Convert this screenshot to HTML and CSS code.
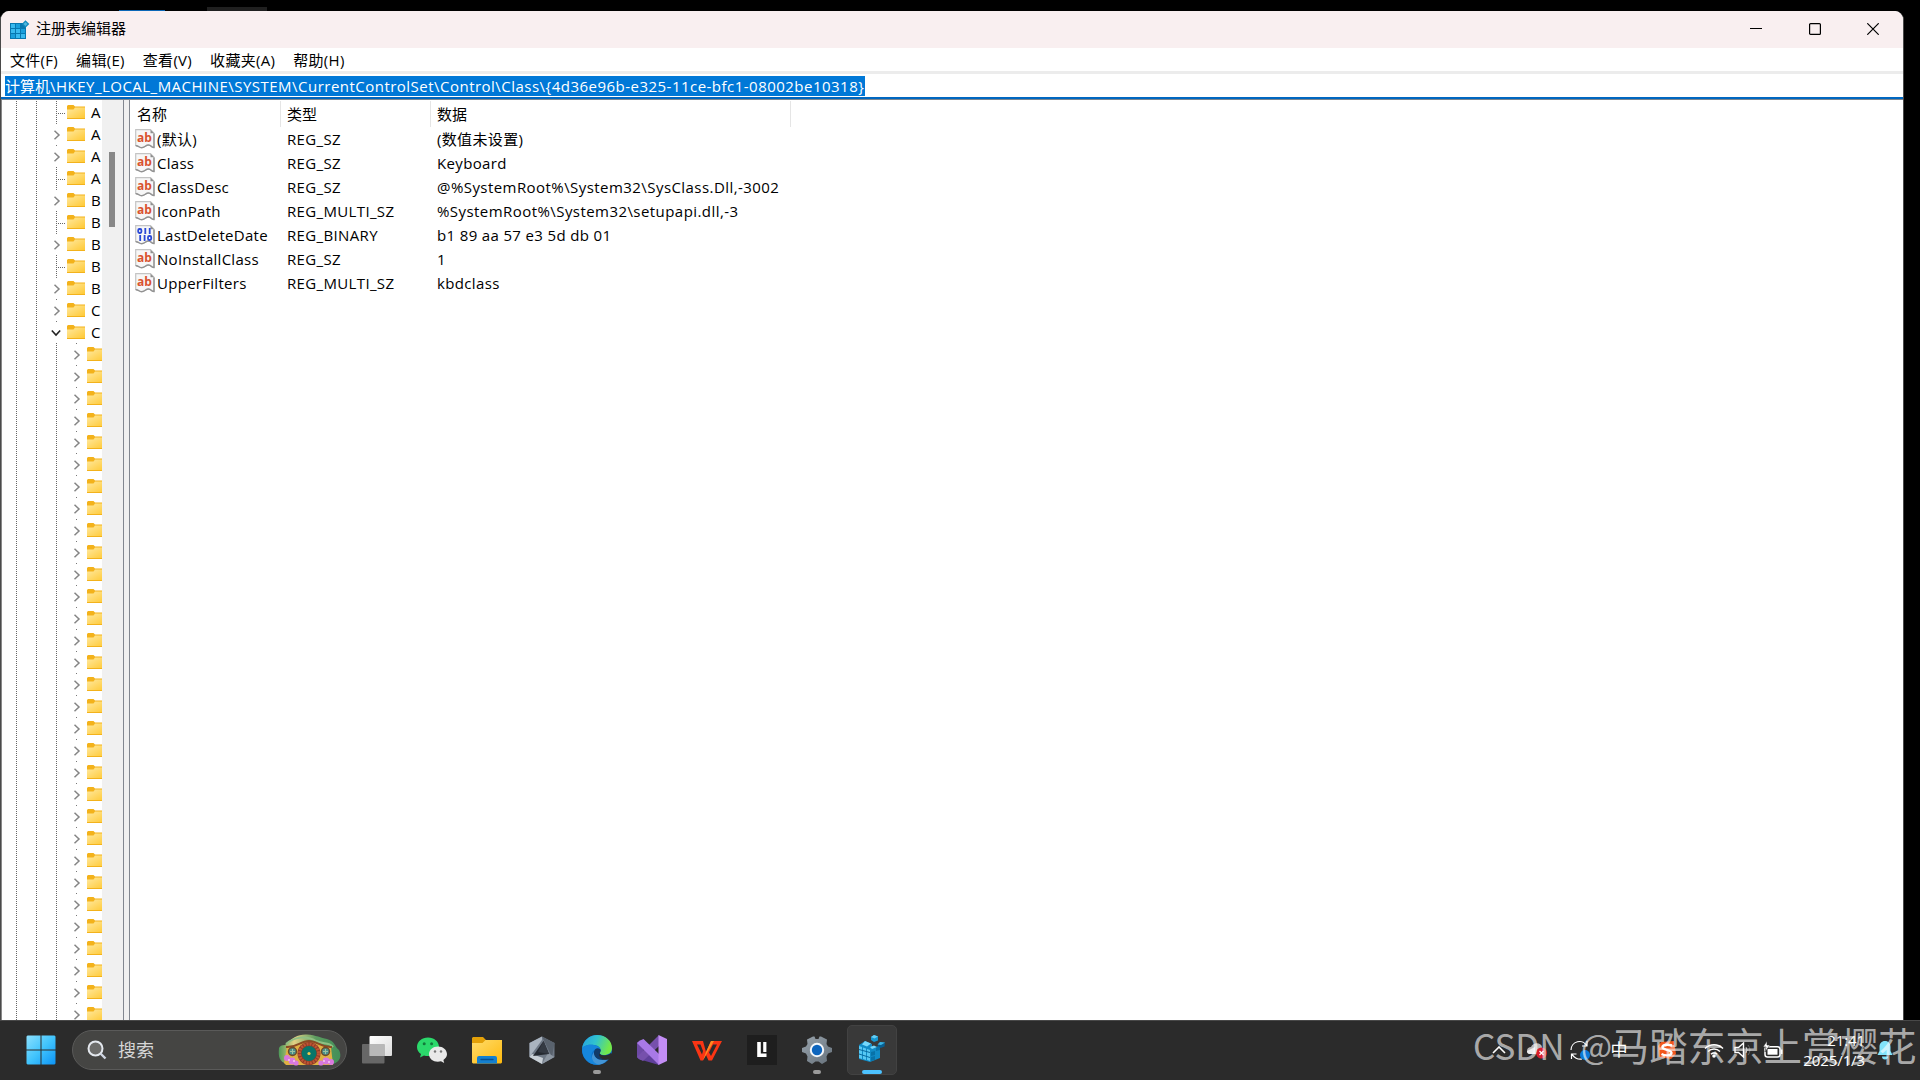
FILE: index.html
```html
<!DOCTYPE html>
<html lang="zh-CN">

<head>
    <meta charset="UTF-8">
    <meta name="viewport" content="width=device-width, initial-scale=1.0">
    <title>注册表编辑器</title>
    <link rel="stylesheet" href="styles.css">
</head>

<body>
    <!-- shared icons -->
    <svg class="defs">
        <defs>
            <linearGradient id="gFolder" x1="0" y1="0" x2="1" y2="1">
                <stop offset="0" stop-color="#ffe9a0" />
                <stop offset="1" stop-color="#ffc935" />
            </linearGradient>
            <linearGradient id="gStart" x1="0" y1="0" x2="1" y2="1">
                <stop offset="0" stop-color="#8ce0fd" />
                <stop offset=".5" stop-color="#41c4fd" />
                <stop offset="1" stop-color="#0c93f5" />
            </linearGradient>
            <linearGradient id="gEdge" x1="0" y1="0" x2="1" y2=".3">
                <stop offset="0" stop-color="#259ee0" />
                <stop offset=".5" stop-color="#31c3cf" />
                <stop offset="1" stop-color="#73e84a" />
            </linearGradient>
            <linearGradient id="gExplorer" x1="0" y1="0" x2="1" y2="1">
                <stop offset="0" stop-color="#ffdc6b" />
                <stop offset="1" stop-color="#ffb90d" />
            </linearGradient>
            <linearGradient id="gGear" x1="0" y1="0" x2="1" y2="1">
                <stop offset="0" stop-color="#98a3ac" />
                <stop offset="1" stop-color="#66717b" />
            </linearGradient>
            <linearGradient id="gHill" x1="0" y1="0" x2="1" y2="0">
                <stop offset="0" stop-color="#4d9a59" />
                <stop offset=".25" stop-color="#e3d184" />
                <stop offset=".6" stop-color="#5c9c60" />
                <stop offset="1" stop-color="#428f58" />
            </linearGradient>
            <linearGradient id="gTaskView" x1="0" y1="0" x2="1" y2="1">
                <stop offset="0" stop-color="#fff" />
                <stop offset="1" stop-color="#dcdcdc" />
            </linearGradient>
        </defs>
        <symbol id="folder" viewBox="0 0 18 14">
            <path d="M0 1 L1 0 H6.5 L8 1.500 H18 V14 H0 Z" fill="#f3b21b" />
            <path d="M0 4.500 H6.500 L8 2.500 H18 V13 H0 Z" fill="url(#gFolder)" />
        </symbol>
        <symbol id="right" viewBox="0 0 8 10">
            <path d="M1.500 .8 L6 5 L1.500 9.200" fill="none" stroke="#858585" stroke-width="1.500" />
        </symbol>
        <symbol id="down" viewBox="0 0 10 8">
            <path d="M.8 1.500 L5 6 L9.200 1.500" fill="none" stroke="#222" stroke-width="1.600" />
        </symbol>
        <symbol id="sheet" viewBox="0 0 20 20">
            <path d="M.7 .7 H15.500 L19 4.200 V18.300 C16 18.800 16.500 16 13.500 16 C10.500 16 10 18.500 6.500 18.500 C4 18.500 3.500 16.500 .7 16.500 Z" fill="#f7f7f7" stroke="#c4c4c4" stroke-width="1.200" />
            <path d="M.7 16.700 C3.500 16.500 4 18.700 6.500 18.700 C10 18.700 10.500 16 13.500 16 C16.500 16 16 18.800 19 18.500 V4.500" fill="none" stroke="#929292" stroke-width="1.400" />
            <path d="M15.500 .7 V4.200 H19 Z" fill="#8e8e8e" />
        </symbol>
    </svg>

    <div class="behind">
        <span class="tab-blue"></span>
        <span class="tab-dark"></span>
    </div>

    <div class="window">
        <header class="titlebar">
            <svg class="app-icon" viewBox="0 0 20 20">
                <rect x="0" y="3" width="16" height="16" fill="#0878b0" />
                <path d="M1 4h4v4H1zM1 9h4v4H1zM6 9h4v4H6zM6 14h4v4H6zM11 14h4v4h-4z" fill="#39b9ee" />
                <path d="M6 4h4v4H6zM11 9h4v4h-4zM1 14h4v4H1z" fill="#1a9fdc" />
                <path d="M15.500 .3 L19.300 4 L15.500 7.700 L11.800 4 Z" fill="#1389bd" />
                <path d="M15.500 2 L17.500 4 L15.500 6 L13.500 4 Z" fill="#4fb8df" />
            </svg>
            <span class="title">注册表编辑器</span>
            <div class="controls">
                <svg viewBox="0 0 12 12"><path d="M0 5.500 H12" stroke="#000" /></svg>
                <svg viewBox="0 0 12 12"><rect x=".6" y=".6" width="10.800" height="10.800" rx="1" fill="none" stroke="#000" stroke-width="1.200" /></svg>
                <svg viewBox="0 0 12 12"><path d="M.3 .3 L11.700 11.700 M11.700 .3 L.3 11.700" stroke="#000" stroke-width="1.200" /></svg>
            </div>
        </header>

        <nav class="menu">
            <span>文件(F)</span>
            <span>编辑(E)</span>
            <span>查看(V)</span>
            <span>收藏夹(A)</span>
            <span>帮助(H)</span>
        </nav>

        <div class="address">
            <span class="selected">计算机<span class="path">\HKEY_LOCAL_MACHINE\SYSTEM\CurrentControlSet\Control\Class\{4d36e96b-e325-11ce-bfc1-08002be10318}</span></span>
        </div>

        <main class="panes">
            <div class="tree"></div>
            <div class="scrollbar">
                <div class="thumb"></div>
            </div>
            <div class="splitter"></div>
            <div class="list">
                <div class="row head">
                    <span>名称</span>
                    <span>类型</span>
                    <span>数据</span>
                </div>
            </div>
        </main>
    </div>

    <footer class="taskbar">
        <svg class="start" viewBox="0 0 30 30">
            <path d="M1.500 .5h13v14H.5V1.500zM15.500 .5h13l1 1v13h-14zM.5 15.500h14v14h-13l-1-1zM15.500 15.500h14v13l-1 1h-13z" fill="url(#gStart)" />
        </svg>

        <div class="search">
            <svg class="lens" viewBox="0 0 20 20">
                <circle cx="8.500" cy="8.500" r="7" fill="#6c6c6a" stroke="#e4e8ee" stroke-width="2" />
                <path d="M13.500 13.500 L18.500 18.500" stroke="#cfd6e2" stroke-width="2.400" />
            </svg>
            <span>搜索</span>
            <svg class="highlight" viewBox="0 0 64 34">
                <path d="M1 15 Q2 12 7 12 C14 5 20 1 29 1.500 C38 2 43 5 49 6 C57 8 56 13 61 17 C64 23 62 29 55 31 H8 C2 28 0 25 1 15Z" fill="url(#gHill)" />
                <path d="M8 11 C16 4 28 2 38 8 C46 12 50 8 55 14" fill="none" stroke="#8fbf83" stroke-width="2" />
                <path d="M6 30 L9 14 C19 15 21 8 31 8 C41 8 43 15 53 14 L55 32 H8Z" fill="#e0b143" />
                <path d="M8 14 C19 15 22 8 31 8 C40 8 43 15 54 14" fill="none" stroke="#8b4b24" stroke-width="2" />
                <circle cx="31" cy="20.500" r="11.500" fill="#8f3b25" />
                <circle cx="31" cy="20.500" r="9.500" fill="none" stroke="#bd5535" stroke-width="3" stroke-dasharray="2 1" />
                <circle cx="31" cy="20.500" r="7.500" fill="#08766a" />
                <circle cx="31" cy="20.500" r="1.600" fill="#f2ca4c" />
                <circle cx="14.500" cy="18.500" r="4" fill="#4b908a" stroke="#704827" stroke-width="1.400" />
                <circle cx="47.500" cy="18.500" r="4" fill="#4b908a" stroke="#704827" stroke-width="1.400" />
                <path d="M14.500 16v5M12 18.500h5M47.500 16v5M45 18.500h5" stroke="#9ac2a3" />
                <g fill="#d979df">
                    <circle cx="9" cy="25" r="3" /><circle cx="14" cy="28" r="3.400" /><circle cx="18" cy="30" r="2.600" />
                    <circle cx="43" cy="30" r="2.600" /><circle cx="48" cy="28" r="3.400" /><circle cx="53" cy="29" r="3" />
                </g>
                <g fill="#f6c8f2">
                    <circle cx="11" cy="27" r="1" /><circle cx="16" cy="28" r="1" /><circle cx="46" cy="28" r="1" /><circle cx="51" cy="29" r="1" />
                </g>
            </svg>
        </div>

        <div class="apps">
            <div class="app">
                <!-- task view -->
                <svg viewBox="0 0 30 30">
                    <rect x="7.500" y="1" width="22.500" height="20" rx="1" fill="url(#gTaskView)" />
                    <rect x="0" y="9" width="22.500" height="19.500" rx="1" fill="#777" fill-opacity=".8" />
                    <path d="M7.500 9h15v12h-15z" fill="#b8b8b8" />
                </svg>
            </div>
            <div class="app">
                <!-- wechat -->
                <svg viewBox="0 0 30 30">
                    <path d="M11 2.500C5 2.500 0 6.500 0 12c0 3 1.500 5.500 4 7l-1 3.500 4-2c6 2 15-1 15-8.500C22 6.500 17 2.500 11 2.500Z" fill="#2bd96b" />
                    <circle cx="7.200" cy="8.700" r="1.500" fill="#137a3b" /><circle cx="14.600" cy="8.700" r="1.500" fill="#137a3b" />
                    <path d="M21 11.500c-5 0-9 3.300-9 7.800 0 5.500 6 8.700 12 7l3.200 1.700-.8-3c2-1.300 3.600-3.500 3.600-5.700 0-4.500-4-7.800-9-7.800Z" fill="#e9e9e9" />
                    <circle cx="18" cy="16.500" r="1.200" fill="#777" /><circle cx="24" cy="16.500" r="1.200" fill="#777" />
                </svg>
            </div>
            <div class="app">
                <!-- explorer -->
                <svg viewBox="0 0 30 30">
                    <path d="M0 3l1-1h10l3 3h15l1 1v5H0z" fill="#e3a008" />
                    <path d="M0 8h10.500l3-3H30v22.500l-1 1H1l-1-1z" fill="url(#gExplorer)" />
                    <path d="M5 28.500V23q0-2 2-2h16q2 0 2 2v5.500z" fill="#1480d0" />
                    <path d="M9 24.500h12" stroke="#084f91" stroke-width="1.400" stroke-linecap="round" />
                </svg>
            </div>
            <div class="app">
                <!-- polyhedron -->
                <svg viewBox="0 0 30 30">
                    <path d="M15 1.500 L27.500 8 V22 L15 29 L2.500 22 V8Z" fill="#6f7986" />
                    <path d="M15 1.500 L2.500 8 V22 L15 5Z" fill="#aab4bf" />
                    <path d="M15 1.500 L27.500 8 L25 22 Z" fill="#59626d" />
                    <path d="M2.500 22 L15 29 L16 23 L5 19Z" fill="#c9d0d6" />
                    <path d="M15 29 L27.500 22 L21 18Z" fill="#8d97a2" />
                    <path d="M16.500 6 L22 19 L6 21Z" fill="#252a31" />
                    <path d="M16.500 6 L11 17 L22 19Z" fill="#343a43" />
                </svg>
            </div>
            <div class="app running">
                <!-- edge -->
                <svg viewBox="0 0 30 30">
                    <circle cx="15" cy="15" r="15" fill="#0c70c9" />
                    <path d="M0 14C1 5 8 0 15 0c9 0 15 6 15 13 0 5-4 7-8 7-3 0-5-1-4-3 2-3-1-7-6-7C6 9 1 11 0 14Z" fill="url(#gEdge)" />
                    <path d="M0 14c1-3 6-5 12-4 4 1 7 3 6.500 6-1.500-3-6.500-3-8.500 2-2 6 3 10 7 11.700C7 31 0 23 0 14Z" fill="#1686dc" />
                    <path d="M18.300 17c-1.500 2 .7 3.500 4 3.500 3 0 5.500-1 6.700-2.500-1 4-2 5-4 7-7 2-14-2-13-8 .5-3 3-5 6-3 1 .8 1 2 .3 3Z" fill="#123b69" />
                    <path d="M12 17c-1 6 6 10 14 7-2 3-5 5-9 5.800C10 28 8 22 12 17Z" fill="#4395d6" />
                    <path d="M18.300 17c-1.500 2 .7 3.500 4 3.500 3 0 5.500-1 6.700-2.500l2 2-3 4c-4 2-10 0-11-4z" fill="#2b2b2b" />
                </svg>
                <i></i>
            </div>
            <div class="app">
                <!-- visual studio -->
                <svg viewBox="0 0 30 30">
                    <path d="M0 8l3-2.500L22 22v8L1.500 24 0 22z" fill="#60409b" />
                    <path d="M6.500 11.500V19l4-3.700z" fill="#2b2b2b" />
                    <path d="M0 8l3-2.500 3.500 3V21l-3.500 3.500L0 22z" fill="#6d49a5" />
                    <path d="M3 24.500L6 26 22 11V0L0 22z" fill="#7650ac" />
                    <path d="M0 8l3-2.500L6.500 4 22 19v11z" fill="#a879e6" />
                    <path d="M21.500 0L30 4v22l-8.500 4z" fill="#c38df5" />
                </svg>
            </div>
            <div class="app">
                <!-- wps -->
                <svg viewBox="0 0 30 30">
                    <path d="M0 6h11l3 11 5-11h11l-10 19.500h-3.500L14 20l-3 5.500H8.500zM5 9.500l5 10 1-3.500-2.500-6.500zM21 9.500l-4 8 2 3.500 6-11.500z" fill="#fa3514" fill-rule="evenodd" />
                    <path d="M14 17l5-11h3l-8 14-3 5.500z" fill="#ff8b21" />
                </svg>
            </div>
            <div class="app">
                <svg viewBox="0 0 30 30">
                    <rect width="30" height="30" fill="#1e1e1e" />
                    <path d="M12 7v13.300h7.500" fill="none" stroke="#fff" stroke-width="3.600" />
                    <path d="M17.800 7v10" fill="none" stroke="#fff" stroke-width="3.200" />
                </svg>
            </div>
            <div class="app running">
                <!-- settings -->
                <svg viewBox="0 0 30 30">
                    <path d="M11 1.500h1.500l1 2.500h3l1-2.500H19l6 3-.5 4.500 1.500 2.500 4 1.500v4l-4 1.500-1.500 3 .5 4.500-5 3-3.500-2.500h-3L10 29l-5-3 .5-4.500L4 18.500 0 17v-4l4-1.500L5.500 9 5 4.500z" fill="url(#gGear)" />
                    <circle cx="15" cy="15" r="7.200" fill="#f4f7fa" />
                    <circle cx="15" cy="15" r="5.200" fill="#0d65bd" />
                </svg>
                <i></i>
            </div>
            <div class="app active">
                <!-- registry editor -->
                <svg viewBox="0 0 30 30">
                    <path d="M2 10l6-4 7 3v4l8-2v12l-10 4-11-3z" fill="#118bc6" />
                    <path d="M2 11l3 1v12l-3-1zM6 12.500l3 1V25l-3-1zM10 14l3 1v11l-3-1z" fill="#56c8f4" />
                    <path d="M2 14.500l11 3M2 19l11 3.500" stroke="#08699f" />
                    <path d="M14 17l4-1v4l-4 1zM19 12l4-1v4l-4 1zM14 22l4-1v4l-4 1z" fill="#0872a8" />
                    <path d="M8 6l6 2.500-4 3-5-2zM13 12l4-1.500 3 1.500-5 2z" fill="#75d7fa" />
                    <path d="M17 0l4 1.500v4L17 7l-3-2V2z" fill="#1797d0" /><path d="M17 0l4 1.500-3.500 2L14 2z" fill="#65cdf3" />
                    <path d="M23 7l5 .5-.5 4-4 1.500-3-2.500z" fill="#075f91" /><path d="M23 7l5 .5-4 2.500-3.500-.5z" fill="#3bb3e2" />
                </svg>
                <i></i>
            </div>
        </div>

        <div class="tray">
            <div class="w28"><svg class="chev" viewBox="0 0 14 8"><path d="M1 7L7 1l6 6" fill="none" stroke="#fff" stroke-width="1.600" /></svg></div>
            <div class="w48">
                <svg class="cloud" viewBox="0 0 22 18">
                    <path d="M1 10c0-3 2-4 4-4 2-5 10-5 11 0v7H4c-2 0-3-1-3-3z" fill="#b9b9b9" />
                    <path d="M1 10l8-4v7H4c-2 0-3-1-3-3z" fill="#eee" />
                    <circle cx="15.500" cy="12" r="5.500" fill="#d81e2c" />
                    <path d="M13.500 10l4 4m0-4l-4 4" stroke="#fff" stroke-width="1.200" />
                </svg>
            </div>
            <div class="w38">
                <svg class="sync" viewBox="0 0 20 20">
                    <path d="M1 10a8.500 8.500 0 0 1 16-4M17 1v5h-5M12 19a9 9 0 0 1-10-5M1.500 19v-5h5" fill="none" stroke="#fff" stroke-width="1.200" />
                    <circle cx="15" cy="15" r="5" fill="#0a78d7" />
                </svg>
            </div>
            <div class="w40 ime">中</div>
            <div class="w56">
                <svg class="sogou" viewBox="0 0 18 18">
                    <path d="M3 1l13-1 2 13-5 5-12-2-1-11z" fill="#f2571c" />
                    <path d="M14 4.500C9 3 4 4 4.500 6.500S14 9 13.500 12 7 15 3.500 13" fill="none" stroke="#fff" stroke-width="2.400" />
                </svg>
            </div>
            <div class="w38">
                <svg class="wifi" viewBox="0 0 20 16">
                    <path d="M1 6.500a12.700 12.700 0 0 1 18 0M4 9.500a8.500 8.500 0 0 1 12 0M7 12.300a4.200 4.200 0 0 1 6 0" fill="none" stroke="#fff" stroke-width="1.500" />
                    <circle cx="10" cy="14" r="1.800" fill="#fff" />
                </svg>
            </div>
            <div class="w20">
                <svg class="sound" viewBox="0 0 18 16">
                    <path d="M1 5.500h3.500L9.500 1v14l-5-4.500H1z" fill="none" stroke="#fff" stroke-width="1.400" />
                    <path d="M12 5q2 3 0 6" fill="none" stroke="#bbb" /><path d="M14 3q4 5 0 10" fill="none" stroke="#666" />
                </svg>
            </div>
            <div class="w40">
                <svg class="battery" viewBox="0 0 20 18">
                    <rect x="2" y="5.700" width="15" height="10.300" rx="2.500" fill="none" stroke="#fff" stroke-width="1.500" />
                    <rect x="4.500" y="8" width="10" height="5.700" fill="#fff" />
                    <path d="M18.700 8.500v4.500" stroke="#fff" stroke-width="1.500" />
                    <path d="M4 0L0 6h3l-1 5 5-7H4z" fill="#fff" stroke="#2b2b2b" stroke-width=".6" />
                </svg>
            </div>
            <div class="clock"><span>21:41</span><span>2025/1/3</span></div>
            <div class="w40">
                <svg class="bell" viewBox="0 0 16 20">
                    <path d="M8 1C4.500 1 2.500 3.500 2.500 7v4L.5 15h15l-2-4V7C13.500 3.500 11.500 1 8 1zM5 16.500a3 3 0 0 0 6 0z" fill="#82e3fb" />
                </svg>
            </div>
        </div>
    </footer>

    <div class="watermark"><span class="csdn">CSDN</span><span class="at">@</span>马踏东京上赏樱花</div>

    <script>
        // o = leaf, + = collapsed, - = expanded
        const keys = [["A", "o"], ["A", "+"], ["A", "+"], ["A", "o"], ["B", "+"], ["B", "o"],
        ["B", "+"], ["B", "o"], ["B", "+"], ["C", "+"], ["C", "-"]];
        const values = [
            ["(默认)", "REG_SZ", "(数值未设置)"],
            ["Class", "REG_SZ", "Keyboard"],
            ["ClassDesc", "REG_SZ", "@%SystemRoot%\\System32\\SysClass.Dll,-3002"],
            ["IconPath", "REG_MULTI_SZ", "%SystemRoot%\\System32\\setupapi.dll,-3"],
            ["LastDeleteDate", "REG_BINARY", "b1 89 aa 57 e3 5d db 01"],
            ["NoInstallClass", "REG_SZ", "1"],
            ["UpperFilters", "REG_MULTI_SZ", "kbdclass"]
        ];

        const arrow = {
            "o": "<span class='leaf'></span>",
            "+": "<svg class='right'><use href='#right'/></svg>",
            "-": "<svg class='down'><use href='#down'/></svg>"
        };
        const line = "<span class='cell'><span class='line'></span></span>";
        const folder = "<svg class='folder'><use href='#folder'/></svg>";

        let tree = "";
        for (const [name, state] of keys) {
            tree += "<div class='node'>" + line + line + "<span class='cell " + (state == "o" ? "" : "dot") + "'>" + arrow[state] + "</span>" + folder + "<span class='name'>" + name + "</span></div>";
        }
        for (let i = 0; i < 31; i++) {
            tree += "<div class='node'>" + line + line + line + "<span class='cell dot'>" + arrow["+"] + "</span>" + folder + "</div>";
        }
        document.querySelector(".tree").innerHTML = tree;

        const ab = "<text x='9.500' y='12.500' text-anchor='middle' class='ab'>ab</text>";
        // 011 / 110
        const bin = "<g class='bin'><rect x='3.200' y='4' width='3.200' height='4' rx='1.200'/><path d='M10.300 3v6M14.700 3v6M5.200 10v6M9.600 10v6'/><rect x='13' y='11' width='3.200' height='4' rx='1.200'/></g>";
        let rows = "";
        for (const v of values) {
            rows += "<div class='row'><span><svg class='type' viewBox='0 0 20 20'><use href='#sheet'/>" + (v[1] == "REG_BINARY" ? bin : ab) + "</svg>" + v[0] + "</span><span>" + v[1] + "</span><span" + (v[2].includes("\\") ? " class='long'" : "") + ">" + v[2] + "</span></div>";
        }
        document.querySelector(".list").innerHTML += rows;
    </script>
</body>

</html>
```
FILE: styles.css
```css
* {
    box-sizing: border-box;
}

body {
    margin: 0;
    width: 1920px;
    height: 1080px;
    overflow: hidden;
    display: flex;
    flex-direction: column;
    background: #000;
    color: #000;
    font: 15px/20px "Open Sans", "Noto Sans CJK SC", sans-serif;
    white-space: nowrap;
}

svg {
    display: block;
    flex: none;
}

.defs {
    position: absolute;
    width: 0;
    height: 0;
}

.behind {
    height: 11px;
    flex: none;
    display: flex;
    align-items: flex-end;
    padding-left: 119px;
}

.tab-blue {
    width: 46px;
    height: 1px;
    margin-right: 42px;
    background: #0b67b7;
}

.tab-dark {
    width: 60px;
    height: 4px;
    background: #202020;
}

.window {
    width: 1904px;
    height: 1009px;
    flex: none;
    display: flex;
    flex-direction: column;
    overflow: hidden;
    background: #fff;
    border: solid #4a4a4a;
    border-width: 0 1px;
    border-radius: 9px 9px 0 0;
}

.titlebar {
    height: 37px;
    flex: none;
    display: flex;
    align-items: center;
    padding-left: 9px;
    background: #f9eff0;
}

.app-icon {
    width: 20px;
    height: 20px;
}

.title {
    margin: -3px 0 0 6px;
}

.controls {
    display: flex;
    gap: 46.5px;
    margin: -1px 24px 0 auto;
}

.controls svg {
    width: 12px;
    height: 12px;
}

.menu {
    height: 23px;
    flex: none;
    display: flex;
    align-items: center;
    gap: 18px;
    padding-left: 9px;
    letter-spacing: .3px;
}

.address {
    height: 29px;
    flex: none;
    padding: 2px 0 0 4px;
    border-top: 3px solid #ececec;
    border-bottom: 1px solid #7c8690;
    box-shadow: inset 0 -2px #0067c0;
}

.selected {
    display: block;
    width: 860px;
    height: 20px;
    line-height: 20px;
    color: #fff;
    background: #0078d7;
}

.path {
    letter-spacing: .48px;
}

.panes {
    flex: 1;
    min-height: 0;
    display: flex;
}

.tree {
    width: 101px;
    padding: 1px 0 0 4px;
    overflow: hidden;
    border-left: 1px solid #888;
}

.node {
    height: 22px;
    display: flex;
    align-items: center;
}

.cell {
    width: 20px;
    height: 22px;
    flex: none;
    display: flex;
    align-items: center;
    justify-content: center;
}

.line {
    width: 1px;
    height: 22px;
    background: repeating-linear-gradient(#666 0 1px, transparent 1px 2px);
}

/* connector of a key that has no subkeys */
.leaf {
    width: 9px;
    height: 22px;
    margin-left: 9px;
    background:
        repeating-linear-gradient(#666 0 1px, transparent 1px 2px) 0 0 / 1px 22px no-repeat,
        repeating-linear-gradient(90deg, #666 0 1px, transparent 1px 2px) 0 12px / 9px 1px no-repeat;
}

.dot {
    background: linear-gradient(#777, #777) 10px 0 / 1px 1px no-repeat;
}

.right {
    width: 8px;
    height: 10px;
    margin: 2px 0 0 1px;
}

.down {
    width: 10px;
    height: 8px;
    margin-top: 2px;
}

.folder {
    width: 18px;
    height: 14px;
    margin-left: 1px;
}

.name {
    margin-left: 6px;
}

.scrollbar {
    width: 21px;
    padding: 52px 0 0 7px;
    background: #f0f0f0;
}

.thumb {
    width: 6px;
    height: 75px;
    background: #888;
}

.splitter {
    width: 7px;
    background: #f0f0f0;
    border: solid #828790;
    border-width: 0 1px;
}

.list {
    flex: 1;
    padding-top: 1px;
}

.row {
    height: 24px;
    display: grid;
    grid-template-columns: 151px 150px 360px;
    align-items: center;
}

.row > span {
    display: flex;
    align-items: center;
    padding-left: 6px;
    letter-spacing: .35px;
}

.row > span:first-child {
    gap: 2px;
    padding-left: 5px;
    letter-spacing: .28px;
}

.row > .long {
    letter-spacing: .44px;
}

.row.head {
    height: 26px;
}

.row.head > span {
    height: 26px;
    letter-spacing: 0;
    border-right: 1px solid #e5e5e5;
}

.row.head > span:first-child {
    padding-left: 7px;
}

.type {
    width: 20px;
    height: 20px;
    letter-spacing: 0;
}

.ab {
    font: bold 12px "Open Sans", sans-serif;
    fill: #d9532f;
}

.bin {
    fill: none;
    stroke: #2b49d6;
    stroke-width: 1.8;
}

.taskbar {
    height: 60px;
    flex: none;
    display: flex;
    align-items: center;
    padding: 0 0 1px 26px;
    background: #2b2b2b;
    border-top: 1px solid #484848;
}

.start {
    width: 30px;
    height: 30px;
}

.search {
    width: 275px;
    height: 40px;
    display: flex;
    align-items: center;
    margin-left: 16px;
    padding: 0 4px 0 14px;
    border: 1px solid #5a5a59;
    border-radius: 20px;
    background: #454543;
    color: #d6d6d6;
    font-size: 18px;
}

.lens {
    width: 20px;
    height: 20px;
    margin-right: 11px;
}

.highlight {
    width: 64px;
    height: 34px;
    margin-left: auto;
}

.apps {
    display: flex;
    margin-left: 2px;
}

.app {
    width: 50px;
    height: 50px;
    position: relative;
    display: flex;
    align-items: center;
    justify-content: center;
    margin: 0 2px 0 3px;
    border-radius: 5px;
}

.app svg {
    width: 30px;
    height: 30px;
}

.app.active {
    background: #393939;
    border: 1px solid #424242;
}

.app i {
    position: absolute;
    bottom: 1px;
    width: 8px;
    height: 4px;
    border-radius: 2px;
    background: #9b9b9b;
}

.app.active i {
    bottom: 0;
    width: 20px;
    background: #4cc2ff;
}

.tray {
    display: flex;
    align-items: center;
    margin: 0 15px 0 auto;
    color: #fff;
}

.tray > div {
    display: flex;
    justify-content: center;
}

.w20 { width: 20px; }
.w28 { width: 28px; }
.w38 { width: 38px; }
.w40 { width: 40px; }
.w48 { width: 48px; }
.w56 { width: 56px; }

.chev { width: 14px; height: 8px; }
.cloud { width: 22px; height: 18px; }
.sync { width: 20px; height: 20px; }
.sogou { width: 18px; height: 18px; }
.wifi { width: 20px; height: 16px; }
.sound { width: 18px; height: 16px; }
.battery { width: 20px; height: 18px; }
.bell { width: 16px; height: 20px; }

.ime {
    font-size: 17px;
}

.tray .clock {
    width: 72px;
    flex-direction: column;
    align-items: flex-end;
    letter-spacing: -.1px;
}

/* signature over the tray */
.watermark {
    position: absolute;
    left: 1473px;
    top: 1018px;
    display: flex;
    font: 38.2px/54px "Noto Sans CJK SC", sans-serif;
    color: rgba(255, 255, 255, .62);
}

.csdn {
    width: 108px;
    font-size: 35px;
}

.at {
    width: 30px;
    font-size: 33px;
}
```
